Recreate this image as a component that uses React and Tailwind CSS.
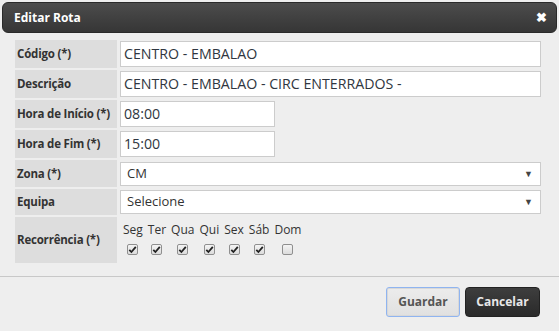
import React from 'react';

const font = { fontFamily: '"Open Sans", "Noto Sans", sans-serif' };

const Row = ({ label, h = 'h-[28px]', children }) => (
    <div className={`flex gap-[3px] ${h}`}>
        <div className="w-[102px] shrink-0 bg-[#dddddd] flex items-center pl-[2px] text-[11.5px] tracking-[-0.2px] whitespace-nowrap font-bold text-[#333]">
            {label}
        </div>
        <div className="flex-1 flex items-center pr-[16px]">{children}</div>
    </div>
);

const TextInput = ({ value, w = 'w-full' }) => (
    <div className={`${w} h-[26px] bg-white border border-[#cccccc] flex items-center px-[3px] text-[14.2px] text-[#2f3640]`}>
        {value}
    </div>
);

const Select = ({ value }) => (
    <div className="w-full h-[24px] bg-white border border-[#cccccc] flex items-center justify-between pl-[6px] pr-[7px] text-[13px] text-[#333]">
        <span>{value}</span>
        <span className="text-[9px] text-[#444]">▼</span>
    </div>
);

const days = [
    { d: 'Seg', on: true },
    { d: 'Ter', on: true },
    { d: 'Qua', on: true },
    { d: 'Qui', on: true },
    { d: 'Sex', on: true },
    { d: 'Sáb', on: true },
    { d: 'Dom', on: false },
];

const Check = ({ on }) => (
    <div className="w-[11px] h-[11px] rounded-[2px] border border-[#8f8f8f] bg-gradient-to-b from-[#f4f4f4] to-[#dcdcdc] flex items-center justify-center">
        {on && (
            <svg width="9" height="9" viewBox="0 0 9 9">
                <path d="M1.3 4.8 L3.4 7 L7.8 1.8" fill="none" stroke="#222" strokeWidth="1.8" />
            </svg>
        )}
    </div>
);

export default function App() {
    return (
        <div className="w-[559px] h-[331px] bg-[#eeeeee] flex flex-col p-[2px] overflow-hidden" style={font}>
            <div className="h-[31px] shrink-0 rounded-[6px] bg-gradient-to-b from-[#4c4c4c] to-[#363636] border border-[#2a2a2a] flex items-center justify-between pl-[11px] pr-[9px]">
                <span className="text-[12px] font-bold text-white">Editar Rota</span>
                <span className="text-[13px] font-bold text-white leading-none">✖</span>
            </div>

            <div className="flex flex-col gap-[2px] pl-[13px] pt-[7px]">
                <Row label="Código (*)"><TextInput value="CENTRO - EMBALAO" /></Row>
                <Row label="Descrição"><TextInput value="CENTRO - EMBALAO - CIRC ENTERRADOS -" /></Row>
                <Row label="Hora de Início (*)"><TextInput value="08:00" w="w-[155px]" /></Row>
                <Row label="Hora de Fim (*)"><TextInput value="15:00" w="w-[155px]" /></Row>
                <Row label="Zona (*)" h="h-[27px]"><Select value="CM" /></Row>
                <Row label="Equipa" h="h-[26px]"><Select value="Selecione" /></Row>
                <Row label="Recorrência (*)" h="h-[46px]">
                    <div className="flex gap-[5px] pl-[3px] -mt-[3px]">
                        {days.map((x) => (
                            <div key={x.d} className="flex flex-col items-center gap-[6px]">
                                <span className="text-[12px] text-[#333] leading-[16px]">{x.d}</span>
                                <Check on={x.on} />
                            </div>
                        ))}
                    </div>
                </Row>
            </div>

            <div className="mt-[13px] -mx-[2px] border-t border-[#c8c8c8] flex justify-end gap-[5px] pt-[10px] pr-[19px]">
                <button className="w-[74px] h-[30px] rounded-[3px] border border-[#8fb4f0] bg-gradient-to-b from-[#ececec] to-[#e0e0e0] shadow-[inset_0_0_0_1px_#d8d8d8] text-[12px] font-bold text-[#555]">
                    Guardar
                </button>
                <button className="w-[75px] h-[30px] rounded-[4px] border border-[#222] bg-gradient-to-b from-[#3e3e3e] to-[#2a2a2a] text-[12px] font-bold text-[#e8e8e8]">
                    Cancelar
                </button>
            </div>
        </div>
    );
}
